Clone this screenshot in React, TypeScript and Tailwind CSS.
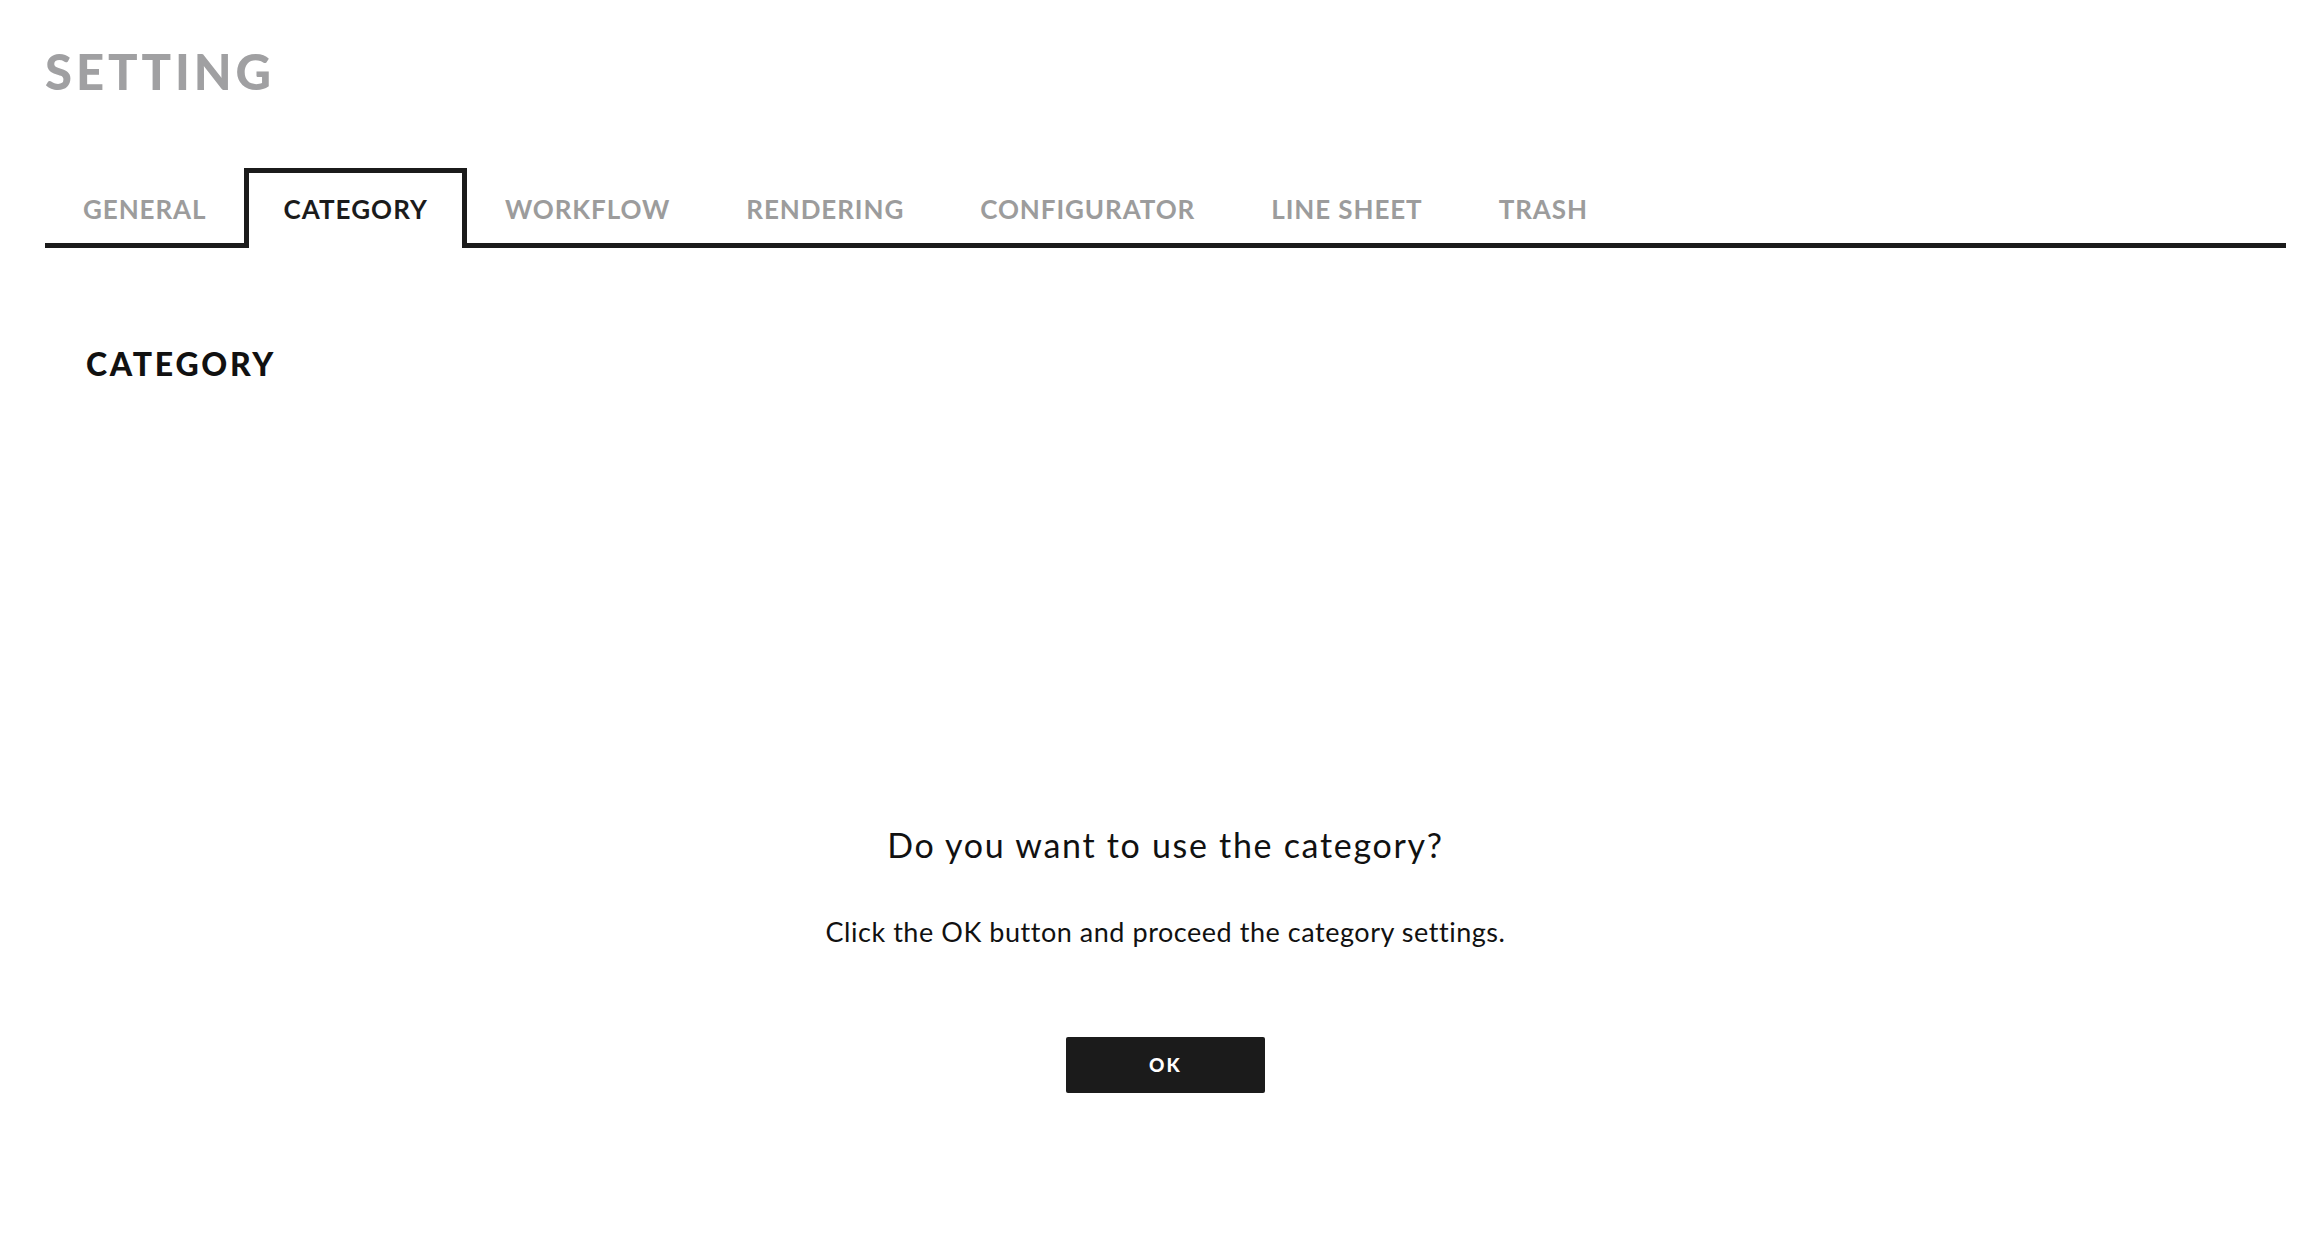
import React, { useState } from 'react';

const tabs = ['GENERAL', 'CATEGORY', 'WORKFLOW', 'RENDERING', 'CONFIGURATOR', 'LINE SHEET', 'TRASH'];

const font = { fontFamily: 'Lato, "Noto Sans", sans-serif' };

const App: React.FC = () => {
  const [active, setActive] = useState('CATEGORY');

  return (
    <div className="min-h-screen bg-white pl-[45px] pr-[12px]" style={font}>
      <h1 className="pt-[47px] text-[49px] leading-none font-black tracking-[0.08em] text-[#a0a0a2]">
        SETTING
      </h1>

      {/* tab bar */}
      <nav className="mt-[72px] flex items-end border-b-[5px] border-[#1b1b1b]">
        {tabs.map((tab) =>
          tab === active ? (
            <button
              key={tab}
              onClick={() => setActive(tab)}
              className="-mb-[5px] flex h-[80px] items-end border-[5px] border-b-0 border-[#1b1b1b] bg-white px-[34px] pb-[26px] text-[26px] leading-none font-bold tracking-[0.04em] text-[#1b1b1b]"
            >
              {tab}
            </button>
          ) : (
            <button
              key={tab}
              onClick={() => setActive(tab)}
              className="flex h-[75px] items-end px-[38px] pb-[21px] text-[26px] leading-none font-bold tracking-[0.035em] text-[#9c9c9c]"
            >
              {tab}
            </button>
          )
        )}
      </nav>

      <div className="px-[41px]">
        <h2 className="mt-[100px] text-[32px] leading-none font-black tracking-[0.085em] text-[#111]">
          CATEGORY
        </h2>

        <div className="mt-[448px] flex flex-col items-center">
          <p className="text-[34px] leading-none tracking-[0.05em] text-[#111]">Do you want to use the category?</p>
          <p className="mt-[56px] text-[27px] leading-none tracking-[0.02em] text-[#111]">
            Click the OK button and proceed the category settings.
          </p>
          <button className="mt-[92px] h-[56px] w-[199px] rounded-[2px] bg-[#1b1b1b] text-[19px] font-black tracking-[0.12em] text-white">
            OK
          </button>
        </div>
      </div>
    </div>
  );
};

export default App;
